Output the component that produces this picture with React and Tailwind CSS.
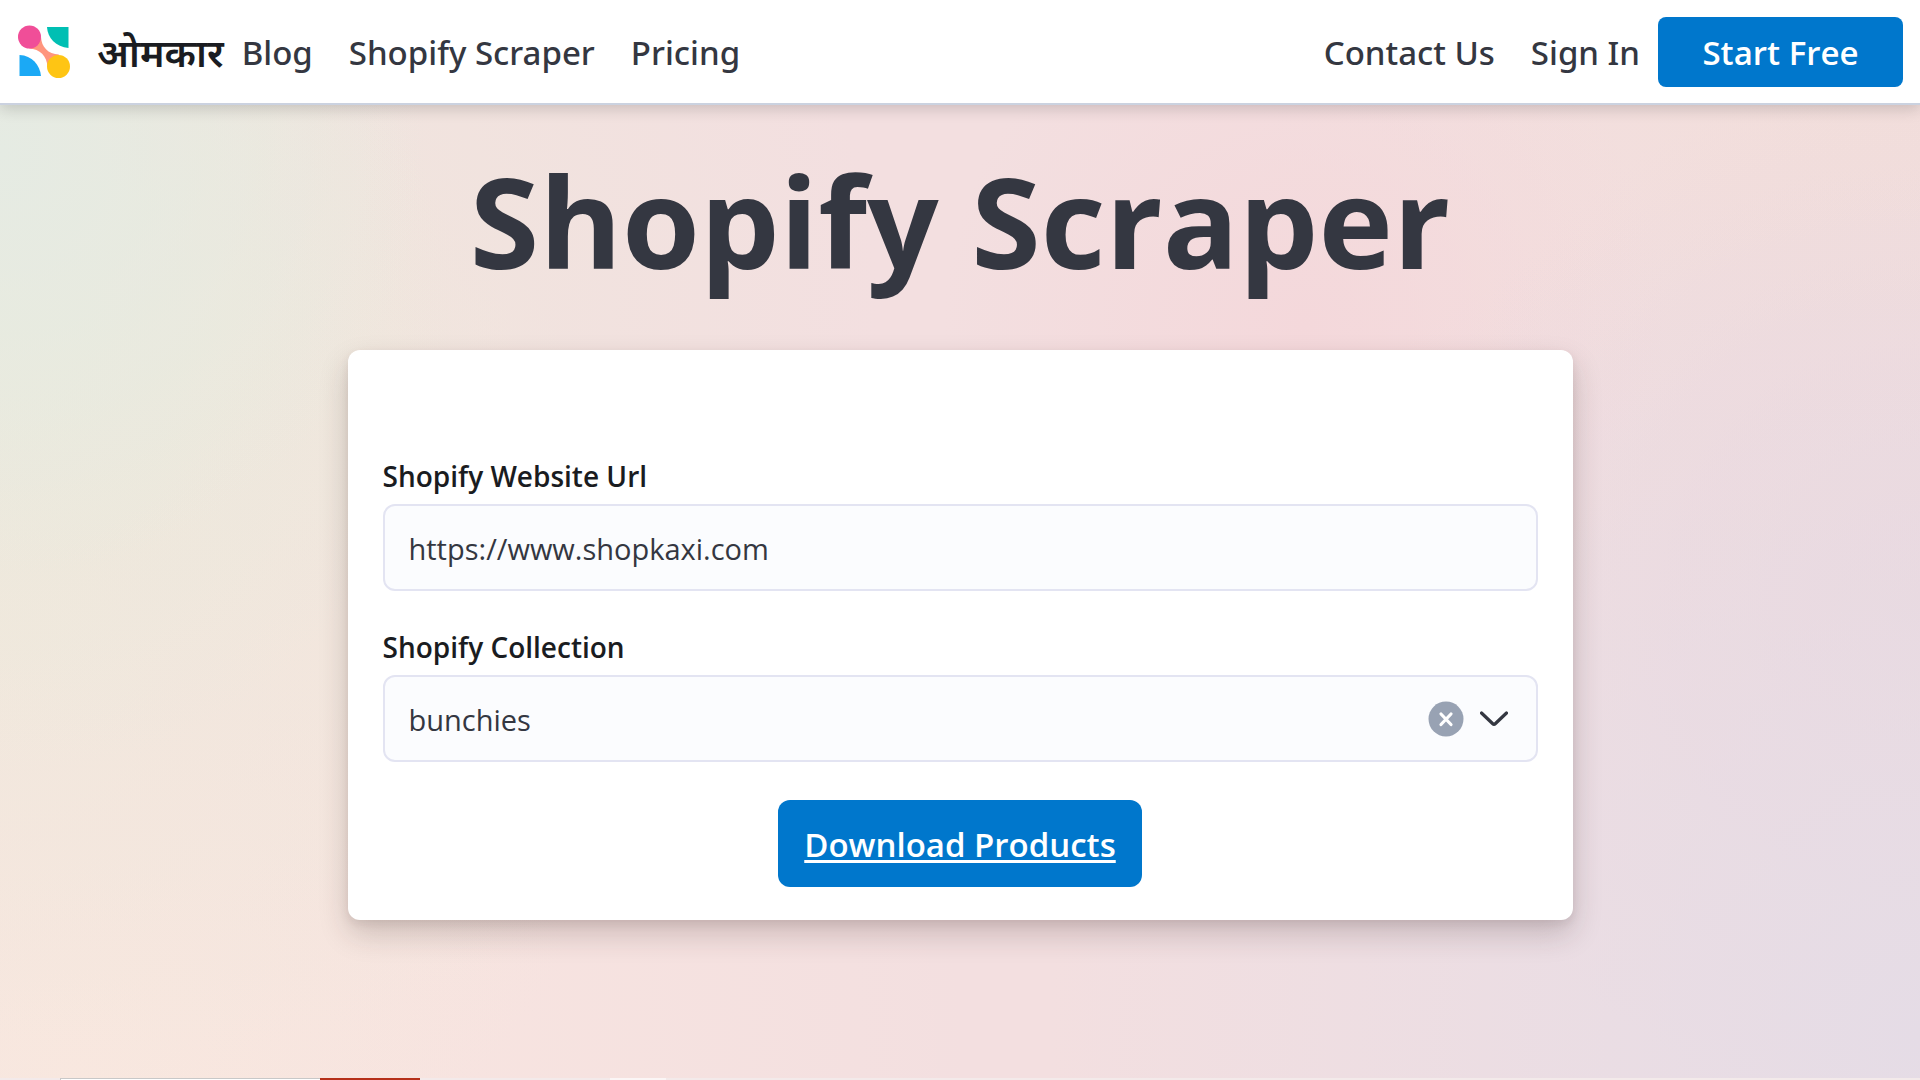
const navLink =
  "pt-[2px] font-['Noto_Sans','Open_Sans',sans-serif] text-[33px] leading-[48px] font-medium text-[#343741] whitespace-nowrap";
const labelText = "block text-[28px] leading-[40px] font-semibold text-[#1a1c21]";
const field =
  "w-full rounded-xl border-2 border-[#e3e4f2] bg-[#fbfcfe] px-6 pt-[2px] text-[29px] text-[#343741] h-[87px]";

function Logo() {
  return (
    <svg viewBox="0 0 52 54" className="h-[54px] w-[52px]" aria-hidden="true">
      <path d="M23 12C23.500 22 30 29 41 29.500L29.500 42C29 31 22 24 11 23.500Z" fill="#FF957D" />
      <circle cx="11.500" cy="12" r="11.500" fill="#F04E98" />
      <circle cx="40.500" cy="41.500" r="11.500" fill="#FEC514" />
      <path d="M29 2H50.500V23C38 22 29.500 13 29 2Z" fill="#00BFB3" />
      <path d="M1.500 51V30C14 30.500 22 40 23 51Z" fill="#1BA9F5" />
    </svg>
  );
}

function Header() {
  return (
    <header className="relative flex items-center justify-between border-b-2 border-[#cbd2e0] bg-white pt-[17px] pr-[17px] pb-4 pl-[18px] shadow-[0_4px_14px_rgba(0,0,0,0.16)]">
      <nav className="flex items-center">
        <a href="#home" className="flex items-center gap-[27px]">
          <Logo />
          <span className="text-[39px] leading-[48px] font-semibold whitespace-nowrap text-[#1a1c21]">ओमकार</span>
        </a>
        <div className="ml-[18px] flex items-center gap-9">
          <a href="#blog" className={navLink}>Blog</a>
          <a href="#scraper" className={navLink}>Shopify Scraper</a>
          <a href="#pricing" className={navLink}>Pricing</a>
        </div>
      </nav>
      <div className="flex items-center">
        <a href="#contact" className={navLink}>Contact Us</a>
        <a href="#signin" className={navLink + " ml-9"}>Sign In</a>
        <button type="button" className="ml-[18px] h-[70px] w-[245px] rounded-lg bg-[#0077cc] pt-[2px] text-[33px] font-semibold whitespace-nowrap text-white">
          Start Free
        </button>
      </div>
    </header>
  );
}

function ScraperForm() {
  return (
    <form className="mx-auto w-full max-w-[1225px] rounded-xl bg-white px-[35px] pt-[106px] pb-[33px] shadow-[0_14px_30px_rgba(50,30,30,0.2),0_4px_10px_rgba(50,30,30,0.08)]">
      <label htmlFor="url" className={labelText}>Shopify Website Url</label>
      <input id="url" type="text" defaultValue="https://www.shopkaxi.com" className={field + " mt-2"} />
      <label htmlFor="collection" className={labelText + " mt-9"}>Shopify Collection</label>
      <div className="relative mt-2">
        <select id="collection" defaultValue="bunchies" className={field + " block appearance-none"}>
          <option>bunchies</option>
        </select>
        <div className="pointer-events-none absolute inset-y-0 right-[30px] flex items-center gap-4">
          <button type="button" aria-label="Clear" className="pointer-events-auto rounded-full">
            <svg viewBox="0 0 36 36" className="size-9" aria-hidden="true">
              <circle cx="18" cy="18" r="17.500" fill="#98A2B3" />
              <path d="M13 13L23 23.500M23 13L13 23.500" stroke="#fff" strokeWidth="3.200" strokeLinecap="round" />
            </svg>
          </button>
          <svg viewBox="0 0 28 16" className="h-4 w-7" fill="none" aria-hidden="true">
            <path d="M1.500 2L12.500 12.500Q14 14 15.500 12.500L26.500 2" stroke="#343741" strokeWidth="3.200" strokeLinecap="round" />
          </svg>
        </div>
      </div>
      <div className="mt-[38px] flex justify-center">
        <button type="button" className="h-[87px] w-[364px] rounded-xl bg-[#0077cc] pt-[2px] text-[33px] font-semibold whitespace-nowrap text-white underline decoration-[3px] underline-offset-[3px]">
          Download Products
        </button>
      </div>
    </form>
  );
}

export default function App() {
  return (
    <div className="flex min-h-screen flex-col bg-[#f3dfe0] bg-[radial-gradient(circle_at_0%_14%,#e5ebe3_0%,transparent_20%),radial-gradient(circle_at_0%_30%,#ebeadc_0%,transparent_22%),radial-gradient(circle_at_8%_30%,#efe7dd_0%,transparent_38%),radial-gradient(circle_at_0%_60%,#f4e8dd_0%,transparent_32%),radial-gradient(circle_at_4%_100%,#fae7e0_0%,transparent_42%),radial-gradient(circle_at_100%_96%,#e5dce6_0%,transparent_40%),radial-gradient(circle_at_100%_55%,#ecd8dd_0%,transparent_26%),radial-gradient(circle_at_68%_30%,#f4d8db_0%,transparent_24%),radial-gradient(circle_at_98%_10%,#f2dedb_0%,transparent_30%)] font-['Open_Sans','Noto_Sans',sans-serif]">
      <Header />
      <main className="flex-1 px-8">
        <h1 className="pt-[30px] pb-[45px] text-center text-[126px] leading-[170px] font-bold text-[#343741]">
          Shopify Scraper
        </h1>
        <ScraperForm />
      </main>
      <div className="flex h-[2px] overflow-hidden bg-[#f3eaea] pl-[60px]">
        <div className="w-[260px] border-t border-l border-[#c8c8c8] bg-white" />
        <div className="w-[100px] bg-[#b5301a]" />
        <div className="ml-[190px] w-14 bg-[#fbf6f6]" />
      </div>
    </div>
  );
}
